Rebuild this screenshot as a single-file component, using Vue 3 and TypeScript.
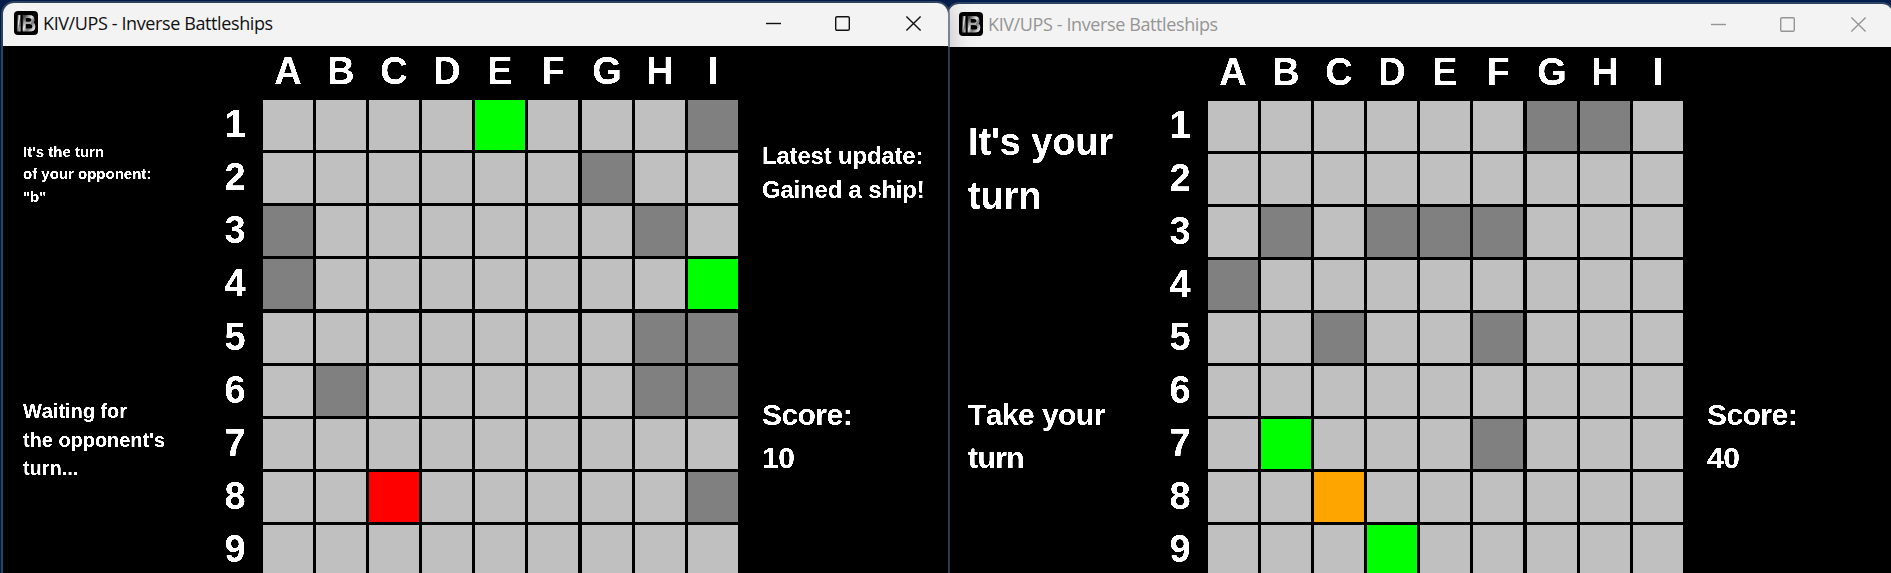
<script setup lang="ts">
type Mark = '.' | 'x' | 'g' | 'r' | 'o'

interface GameWindow {
  id: string
  active: boolean
  rows: string[]
  turn: { size: string; lines: string[] }
  hint: { size: string; lines: string[] }
  update: string[]
  score: number
}

const title = 'KIV/UPS - Inverse Battleships'
const letters = 'ABCDEFGHI'.split('')

const windows: GameWindow[] = [
  {
    id: 'first',
    active: true,
    rows: [
      '....g...x',
      '......x..',
      'x......x.',
      'x.......g',
      '.......xx',
      '.x.....xx',
      '.........',
      '..r.....x',
      '.........',
    ],
    turn: { size: 'tiny', lines: ["It's the turn", 'of your opponent:', '"b"'] },
    hint: { size: 'small', lines: ['Waiting for', "the opponent's", 'turn...'] },
    update: ['Latest update:', 'Gained a ship!'],
    score: 10,
  },
  {
    id: 'second',
    active: false,
    rows: [
      '......xx.',
      '.........',
      '.x.xxx...',
      'x........',
      '..x..x...',
      '.........',
      '.g...x...',
      '..o......',
      '...g.....',
    ],
    turn: { size: 'huge', lines: ["It's your", 'turn'] },
    hint: { size: 'large', lines: ['Take your', 'turn'] },
    update: [],
    score: 40,
  },
]

const kinds: Record<Mark, string> = {
  '.': 'unknown',
  x: 'miss',
  g: 'own',
  r: 'lost',
  o: 'taken',
}

const kindOf = (mark: string): string => kinds[mark as Mark]
</script>

<template>
  <div class="desktop">
    <svg class="defs" width="0" height="0" aria-hidden="true">
      <filter id="crisp" x="0" y="0" width="100%" height="100%">
        <feComponentTransfer>
          <feFuncA type="linear" slope="4" intercept="-1.4" />
        </feComponentTransfer>
      </filter>
      <linearGradient id="chrome" x1="0" y1="0" x2="1" y2="1">
        <stop offset="0" stop-color="#444" />
        <stop offset="0.4" stop-color="#e4e4e4" />
        <stop offset="0.65" stop-color="#777" />
        <stop offset="1" stop-color="#eee" />
      </linearGradient>
    </svg>

    <section v-for="w in windows" :key="w.id" class="window" :class="[w.id, { inactive: !w.active }]">
      <header class="titlebar">
        <svg class="logo" viewBox="0 0 24 24">
          <rect width="24" height="24" rx="4" fill="#000" />
          <rect x="3.5" y="4" width="3" height="16.5" fill="url(#chrome)" />
          <path
            d="M10.2 5.5h5q3.8 0 3.8 3.2 0 2.6-2.4 3.1 3.2.6 3.2 3.6 0 3.7-4.4 3.7h-5.2z"
            fill="none" stroke="url(#chrome)" stroke-width="3"
          />
          <path d="M10 11.9h7" stroke="#aaa" stroke-width="2.4" />
        </svg>
        <span class="title">{{ title }}</span>
        <nav class="controls">
          <svg viewBox="0 0 15 15"><path d="M0 7.5h15" /></svg>
          <svg viewBox="0 0 15 15"><rect x=".7" y=".7" width="13.6" height="13.6" rx="1.3" /></svg>
          <svg viewBox="0 0 15 15"><path d="M.4.4l14.2 14.2M14.6.4L.4 14.6" /></svg>
        </nav>
      </header>

      <main class="game">
        <aside class="side left">
          <div class="upper" :class="w.turn.size">
            <p v-for="line in w.turn.lines" :key="line">{{ line }}</p>
          </div>
          <div class="lower" :class="w.hint.size">
            <p v-for="line in w.hint.lines" :key="line">{{ line }}</p>
          </div>
        </aside>

        <div class="board">
          <span class="corner"></span>
          <span v-for="l in letters" :key="l" class="letter">{{ l }}</span>
          <template v-for="(row, r) in w.rows" :key="r">
            <span class="number">{{ r + 1 }}</span>
            <i v-for="(mark, c) in row.split('')" :key="c" class="cell" :class="kindOf(mark)"></i>
          </template>
        </div>

        <aside class="side right">
          <div class="upper medium">
            <p v-for="line in w.update" :key="line">{{ line }}</p>
          </div>
          <div class="lower large">
            <p>Score:</p>
            <p>{{ w.score }}</p>
          </div>
        </aside>
      </main>
    </section>
  </div>
</template>

<style>
html,
body {
  margin: 0;
  overflow: hidden;
  background: #001f4d;
}
</style>

<style scoped>
.desktop {
  display: flex;
  align-items: flex-start;
  box-sizing: border-box;
  width: 1891px;
  height: 573px;
  padding-left: 3px;
  overflow: hidden;
  background: #001f4d;
}
.defs {
  position: absolute;
}
.window {
  flex: none;
  width: 945px;
  height: 600px;
  margin-top: 3px;
  border-radius: 11px 11px 0 0;
  background: #000;
}
.first {
  position: relative;
  z-index: 1;
  box-shadow: 0 0 0 2px rgba(70, 88, 112, 0.65), 0 0 26px rgba(0, 0, 0, 0.25);
}
.second {
  margin-top: 4px;
  box-shadow: 0 0 0 2px rgba(70, 88, 112, 0.65);
}
.titlebar {
  display: flex;
  align-items: center;
  box-sizing: border-box;
  height: 43px;
  padding: 0 27px 3px 11px;
  border-radius: 11px 11px 0 0;
  background: #f3f3f3;
  color: #111;
}
.inactive .titlebar {
  color: #959595;
}
.logo {
  width: 24px;
  height: 24px;
}
.title {
  margin-left: 5px;
  font: 18px/24px "Open Sans", "Noto Sans", sans-serif;
  letter-spacing: -0.39px;
  white-space: nowrap;
}
.controls {
  display: flex;
  margin-left: auto;
}
.controls svg {
  width: 15px;
  height: 15px;
  fill: none;
  stroke: currentColor;
  stroke-width: 1.4;
  overflow: visible;
}
.controls svg:nth-child(2) {
  margin: 0 56px 0 54px;
}
.game {
  display: grid;
  grid-template-columns: 204px 531px 1fr;
  color: #fff;
  font-family: "Liberation Sans", Arial, sans-serif;
  font-weight: bold;
  font-kerning: none;
}
.side {
  display: grid;
  grid-template-rows: 347px auto;
  box-sizing: border-box;
  white-space: nowrap;
  filter: url(#crisp);
}
.side.left {
  padding-left: 20px;
}
.side.right {
  padding-left: 24px;
}
.side p {
  margin: 0;
}
.tiny {
  font-size: 15px;
  line-height: 22.5px;
}
.small {
  font-size: 20px;
  line-height: 28.5px;
  letter-spacing: -0.04px;
}
.medium {
  font-size: 24px;
  line-height: 34px;
  letter-spacing: -0.2px;
}
.large {
  font-size: 30px;
  line-height: 43px;
  letter-spacing: -0.55px;
}
.huge {
  font-size: 38px;
  line-height: 54px;
  letter-spacing: -0.15px;
}
.upper.tiny {
  padding-top: 94.5px;
}
.upper.medium {
  padding-top: 92.5px;
}
.upper.huge {
  padding-top: 68px;
}
.lower.small {
  padding-top: 4px;
}
.lower.large {
  padding-top: 0;
}
.second .lower.large {
  margin-top: -1px;
}
.board {
  display: grid;
  grid-template-columns: 56px repeat(5, 53px) 54px repeat(2, 53px) 50px;
  grid-template-rows: 54px repeat(3, 53px) 54px repeat(5, 53px);
}
.second .board {
  grid-template-rows: 54px repeat(9, 53px);
}
.letter,
.number {
  width: 50px;
  font-size: 38px;
  line-height: 50px;
  text-align: center;
  filter: url(#crisp);
}
.number {
  width: 56px;
  line-height: 48px;
}
.cell {
  width: 50px;
  height: 50px;
  background: #c0c0c0;
}
.miss {
  background: #808080;
}
.own {
  background: #0f0;
}
.lost {
  background: #f00;
}
.taken {
  background: #ffa500;
}
</style>
